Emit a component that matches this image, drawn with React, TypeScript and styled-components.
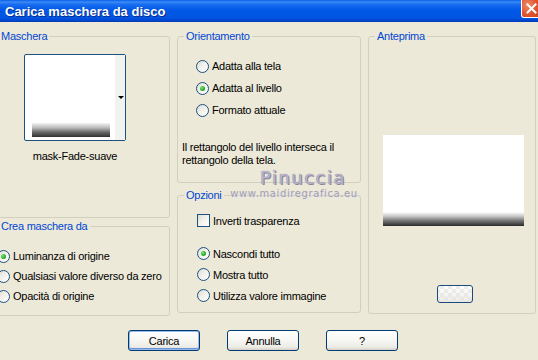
import React from 'react';
import styled, { createGlobalStyle } from 'styled-components';

const Global = createGlobalStyle`
  html, body { margin: 0; padding: 0; }
  body {
    width: 538px; height: 360px; overflow: hidden; background: #ECE9D8;
    font-family: "Liberation Sans", Arial, sans-serif; font-size: 11px; color: #000;
    letter-spacing: -0.25px;
  }
`;

const Window = styled.div`
  width: 538px; height: 360px; display: flex; flex-direction: column;
  background: #ECE9D8; overflow: hidden; position: relative;
`;

const TitleBar = styled.div`
  height: 22px; flex: none; display: flex; align-items: center; justify-content: space-between;
  padding-left: 5px; box-sizing: border-box;
  background: linear-gradient(to bottom, #0A5EEA 0%, #3A8CF6 9%, #1A6DF0 20%, #0058E6 45%, #0055E2 80%, #0048D2 92%, #003AB0 100%);
`;

const Title = styled.span`
  color: #fff; font-family: "Liberation Sans", Arial, sans-serif; font-weight: bold; font-size: 13px;
  text-shadow: 1px 1px 0 #0A2A8A; letter-spacing: 0; margin-top: 1px;
`;

const CloseBtn = styled.div`
  align-self: flex-start; width: 21px; height: 18px; margin-right: -4px; box-sizing: border-box;
  border: 1px solid #fff; border-top: none; border-radius: 0 0 3px 3px;
  background: radial-gradient(circle at 30% 30%, #F08A6A 0%, #E0562F 50%, #C7401C 100%);
  display: flex; align-items: center; justify-content: center;
`;

const Body = styled.div`
  flex: 1; display: flex; flex-direction: column; padding-top: 8px;
`;

const Columns = styled.div`
  display: flex; gap: 7px; margin-left: -8px;
`;

const Column = styled.div<{ $w: number; $gap: number }>`
  width: ${p => p.$w}px; flex: none; display: flex; flex-direction: column; gap: ${p => p.$gap}px;
`;

const Group = styled.fieldset<{ $h: number }>`
  margin: 0; padding: 0; min-width: 0; box-sizing: border-box;
  border: 1px solid #D0D0BF; border-radius: 3px; height: ${p => p.$h}px;
  display: flex; flex-direction: column; align-items: flex-start;
`;

const Legend = styled.legend`
  margin-left: 6px; padding: 0 2px; color: #0046D5; line-height: 13px; font-size: 11px;
`;

const GroupContent = styled.div<{ $pt: number; $pl: number }>`
  padding: ${p => p.$pt}px 0 0 ${p => p.$pl}px; display: flex; flex-direction: column; align-items: flex-start;
`;

const MaskPicker = styled.div`
  width: 102px; display: flex; flex-direction: column; align-items: center;
`;

const Thumb = styled.div`
  width: 102px; height: 87px; box-sizing: border-box; border: 1px solid #1C5180; border-radius: 2px;
  background: #fff; display: flex; padding: 0 0 3px 7px; align-items: flex-end; position: relative;
`;

const ThumbGradient = styled.div`
  width: 78px; height: 14px;
  background: linear-gradient(to bottom, #F4F4F4 0%, #B8B8B8 35%, #6A6A6A 65%, #303030 100%);
`;

const ThumbTrack = styled.div`
  position: absolute; right: 0; top: 0; bottom: 0; width: 10px; background: #F2F2EE;
  display: flex; align-items: center; justify-content: center;
`;

const Arrow = styled.div`
  width: 0; height: 0; border-left: 3px solid transparent; border-right: 3px solid transparent;
  border-top: 3px solid #000; margin-left: 2px;
`;

const Caption = styled.div`
  margin-top: 9px; line-height: 13px; white-space: nowrap;
`;

const OptRow = styled.label<{ $h: number }>`
  height: ${p => p.$h}px; display: flex; align-items: center; gap: 3px; white-space: nowrap;
`;

const RadioCircle = styled.span<{ $checked?: boolean }>`
  width: 13px; height: 13px; box-sizing: border-box; border-radius: 50%; border: 1px solid #1C5180;
  background: linear-gradient(135deg, #DCDBD2 0%, #F1F0EA 45%, #FFFFFF 100%);
  display: flex; align-items: center; justify-content: center; flex: none;
  &::after {
    content: ''; width: 5px; height: 5px; border-radius: 50%;
    background: ${p => (p.$checked ? 'radial-gradient(circle at 35% 35%, #7EE67E 0%, #2DB42D 50%, #1B8F1B 100%)' : 'transparent')};
  }
`;

const CheckBox = styled.span`
  width: 13px; height: 13px; box-sizing: border-box; border: 1px solid #1C5180; flex: none;
  background: linear-gradient(135deg, #DCDBD2 0%, #F1F0EA 45%, #FFFFFF 100%);
`;

const InfoText = styled.div`
  margin: 20px 0 0 -14px; line-height: 13px; width: 176px;
`;

const Spacer = styled.div<{ $h: number }>`
  height: ${p => p.$h}px;
`;

const Preview = styled.div`
  margin: 92px 0 0 14px; width: 141px; height: 91px; background: #fff; display: flex; align-items: flex-end;
`;

const PreviewGradient = styled.div`
  width: 100%; height: 14px;
  background: linear-gradient(to bottom, #FFFFFF 0%, #C8C8C8 30%, #7A7A7A 60%, #2A2A2A 100%);
`;

const SmallBtn = styled.div`
  margin: 59px 0 0 68px; width: 36px; height: 18px; box-sizing: border-box;
  border: 1px solid #1C4C7E; border-radius: 3px;
  background:
    linear-gradient(45deg, rgba(225,225,225,0.6) 25%, transparent 25%, transparent 75%, rgba(225,225,225,0.6) 75%),
    linear-gradient(45deg, rgba(225,225,225,0.6) 25%, transparent 25%, transparent 75%, rgba(225,225,225,0.6) 75%),
    linear-gradient(to bottom, #FFFFFF, #ECEBE4);
  background-size: 8px 8px, 8px 8px, 100% 100%;
  background-position: 10px 3px, 14px 7px, 0 0;
`;

const ButtonRow = styled.div`
  display: flex; gap: 27px; padding-left: 128px; margin-top: 14px;
`;

const Button = styled.button<{ $default?: boolean }>`
  width: 72px; height: 21px; box-sizing: border-box; padding: 0; margin: 0;
  border: 1px solid #003C74; border-radius: 3px;
  font-family: "Liberation Sans", Arial, sans-serif; font-size: 11px; color: #000; letter-spacing: -0.25px;
  background: linear-gradient(to bottom, #FFFFFF 0%, #F6F6F2 50%, #ECEBE6 85%, #D6D0C5 100%);
  box-shadow: ${p => (p.$default ? 'inset 0 0 0 1px #98B8EA, inset 0 -1px 0 1px #6A94D8' : 'none')};
`;

const Watermark = styled.div`
  position: absolute; left: 230px; top: 167px; width: 128px;
  display: flex; flex-direction: column; align-items: center; pointer-events: none;
`;

const WmName = styled.div`
  font-family: "DejaVu Sans", sans-serif; font-size: 18px; line-height: 21px; letter-spacing: 1.5px;
  color: #B9B3CB; text-shadow: 0 0 1px #7E7890, 1px 1px 0 #8C879C; margin-left: 18px;
`;

const WmUrl = styled.div`
  font-family: "DejaVu Sans", sans-serif; font-size: 10px; line-height: 12px; letter-spacing: 0.6px;
  color: #A29EAE; text-shadow: 1px 1px 0 #E6E3EC;
`;

const Radio = ({ label, checked, h }: { label: string; checked?: boolean; h: number }) => (
  <OptRow $h={h}>
    <RadioCircle $checked={checked} />
    <span>{label}</span>
  </OptRow>
);

export default function App() {
  return (
    <Window>
      <Global />
      <TitleBar>
        <Title>Carica maschera da disco</Title>
        <CloseBtn>
          <svg width="11" height="11" viewBox="0 0 11 11">
            <path d="M1.5 1.5 L9.5 9.5 M9.5 1.5 L1.5 9.5" stroke="#fff" strokeWidth="2" strokeLinecap="square" />
          </svg>
        </CloseBtn>
      </TitleBar>
      <Body>
        <Columns>
          <Column $w={178} $gap={2}>
            <Group $h={188}>
              <Legend>Maschera</Legend>
              <GroupContent $pt={11} $pl={31}>
                <MaskPicker>
                  <Thumb>
                    <ThumbGradient />
                    <ThumbTrack><Arrow /></ThumbTrack>
                  </Thumb>
                  <Caption>mask-Fade-suave</Caption>
                </MaskPicker>
              </GroupContent>
            </Group>
            <Group $h={96}>
              <Legend>Crea maschera da</Legend>
              <GroupContent $pt={13} $pl={4}>
                <Radio h={20} checked label="Luminanza di origine" />
                <Radio h={20} label="Qualsiasi valore diverso da zero" />
                <Radio h={20} label="Opacità di origine" />
              </GroupContent>
            </Group>
          </Column>
          <Column $w={184} $gap={6}>
            <Group $h={153}>
              <Legend>Orientamento</Legend>
              <GroupContent $pt={12} $pl={18}>
                <Radio h={22} label="Adatta alla tela" />
                <Radio h={22} checked label="Adatta al livello" />
                <Radio h={22} label="Formato attuale" />
                <InfoText>Il rettangolo del livello interseca il rettangolo della tela.</InfoText>
              </GroupContent>
            </Group>
            <Group $h={124}>
              <Legend>Opzioni</Legend>
              <GroupContent $pt={8} $pl={19}>
                <OptRow $h={21}>
                  <CheckBox />
                  <span>Inverti trasparenza</span>
                </OptRow>
                <Spacer $h={12} />
                <Radio h={21} checked label="Nascondi tutto" />
                <Radio h={21} label="Mostra tutto" />
                <Radio h={21} label="Utilizza valore immagine" />
              </GroupContent>
            </Group>
          </Column>
          <Column $w={168} $gap={0}>
            <Group $h={284}>
              <Legend>Anteprima</Legend>
              <Preview>
                <PreviewGradient />
              </Preview>
              <SmallBtn />
            </Group>
          </Column>
        </Columns>
        <ButtonRow>
          <Button $default>Carica</Button>
          <Button>Annulla</Button>
          <Button>?</Button>
        </ButtonRow>
      </Body>
      <Watermark>
        <WmName>Pinuccia</WmName>
        <WmUrl>www.maidiregrafica.eu</WmUrl>
      </Watermark>
    </Window>
  );
}
